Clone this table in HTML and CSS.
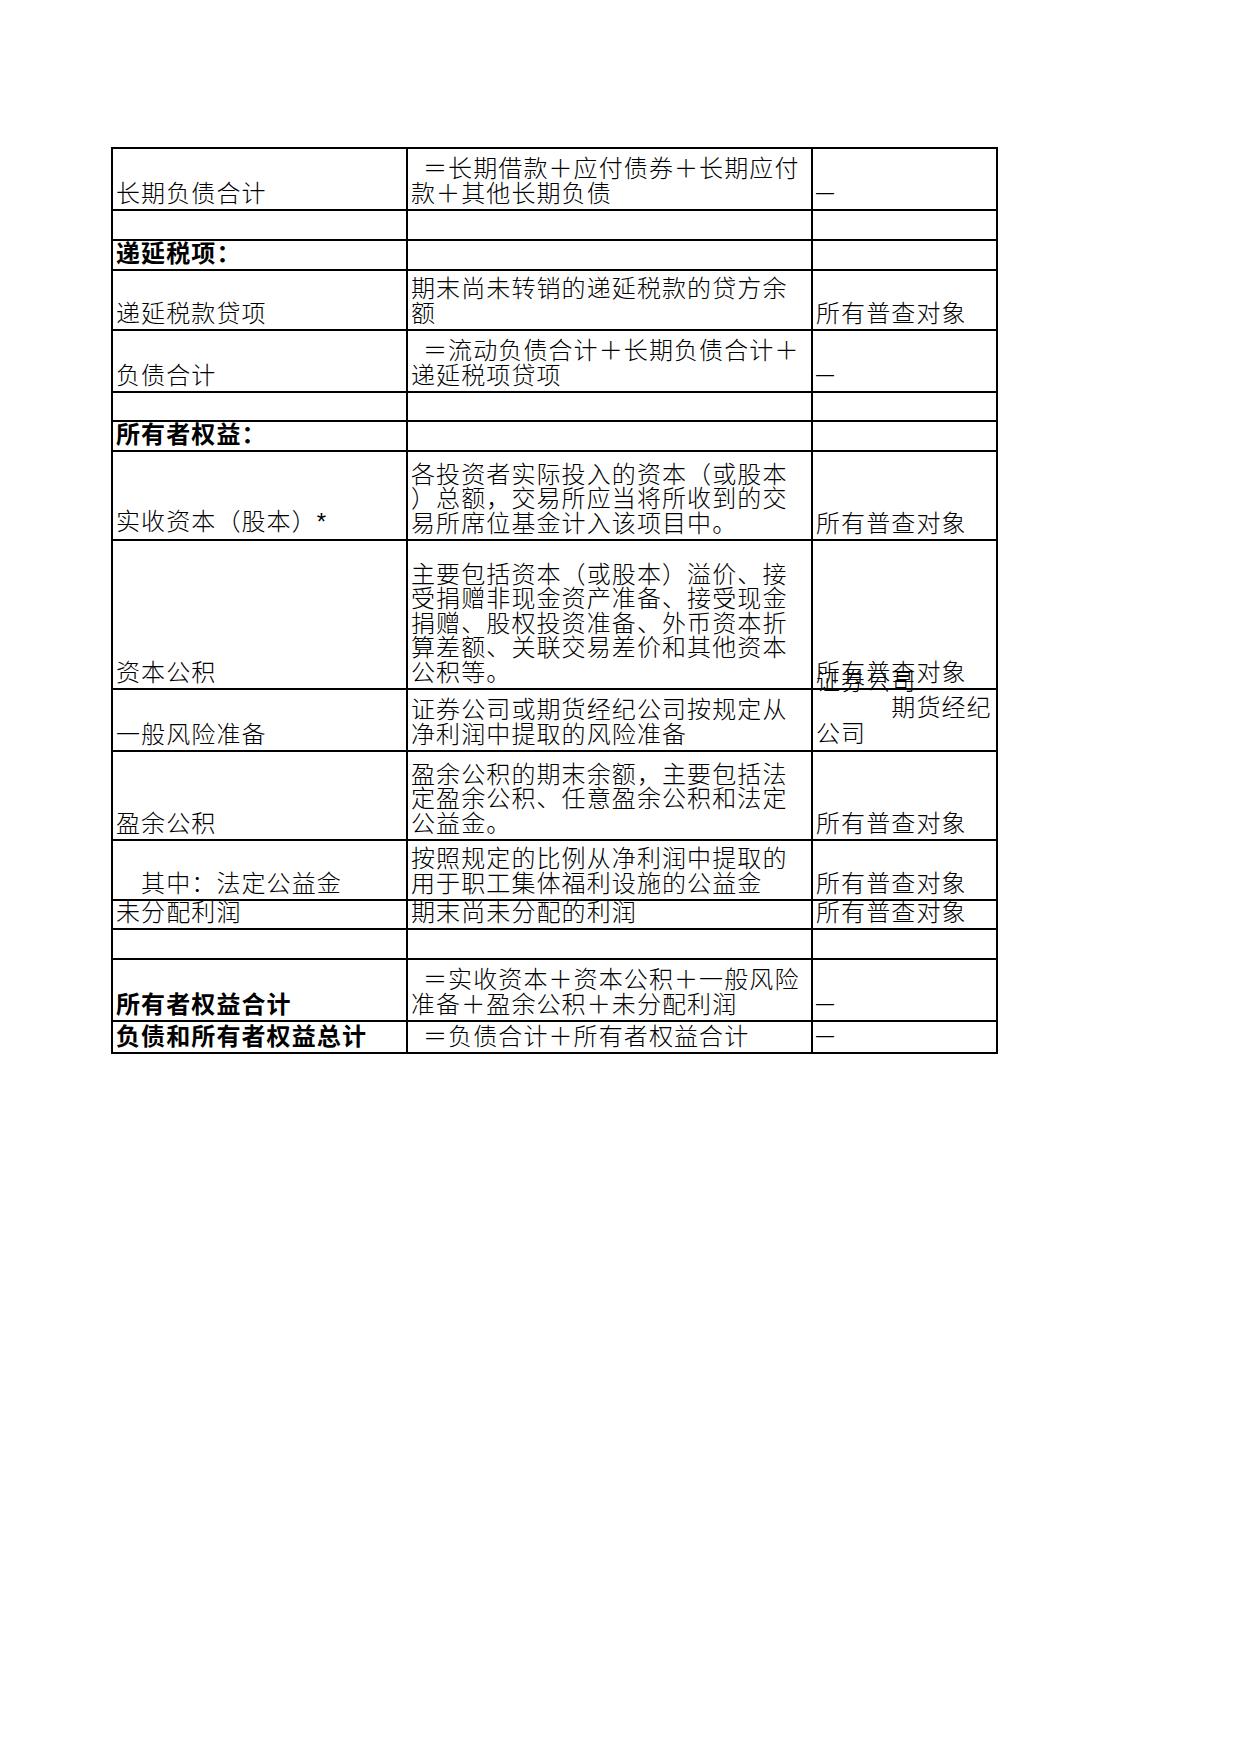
FILE: index.html
```html
<!DOCTYPE html>
<html lang="zh-CN">
<head>
<meta charset="utf-8">
<title>资产负债表指标说明</title>
<link rel="stylesheet" href="styles.css">
</head>
<body>
<div class="sheet">
  <div class="row r62">
    <div class="c c1">长期负债合计</div>
    <div class="c c2 eq">＝长期借款＋应付债券＋长期应付<br>款＋其他长期负债</div>
    <div class="c c3"><span class="dash">—</span></div>
  </div>
  <div class="row r30">
    <div class="c c1"></div>
    <div class="c c2"></div>
    <div class="c c3"></div>
  </div>
  <div class="row r30">
    <div class="c c1 b">递延税项：</div>
    <div class="c c2"></div>
    <div class="c c3"></div>
  </div>
  <div class="row r60">
    <div class="c c1">递延税款贷项</div>
    <div class="c c2">期末尚未转销的递延税款的贷方余<br>额</div>
    <div class="c c3">所有普查对象</div>
  </div>
  <div class="row r62">
    <div class="c c1">负债合计</div>
    <div class="c c2 eq">＝流动负债合计＋长期负债合计＋<br>递延税项贷项</div>
    <div class="c c3"><span class="dash">—</span></div>
  </div>
  <div class="row r29">
    <div class="c c1"></div>
    <div class="c c2"></div>
    <div class="c c3"></div>
  </div>
  <div class="row r30">
    <div class="c c1 b">所有者权益：</div>
    <div class="c c2"></div>
    <div class="c c3"></div>
  </div>
  <div class="row r89">
    <div class="c c1"><span class="txt">实收资本（股本）<span class="ast">*</span></span></div>
    <div class="c c2">各投资者实际投入的资本（或股本<br>）总额，交易所应当将所收到的交<br>易所席位基金计入该项目中。</div>
    <div class="c c3">所有普查对象</div>
  </div>
  <div class="row r149">
    <div class="c c1">资本公积</div>
    <div class="c c2">主要包括资本（或股本）溢价、接<br>受捐赠非现金资产准备、接受现金<br>捐赠、股权投资准备、外币资本折<br>算差额、关联交易差价和其他资本<br>公积等。</div>
    <div class="c c3">所有普查对象</div>
  </div>
  <div class="row r62">
    <div class="c c1">一般风险准备</div>
    <div class="c c2">证券公司或期货经纪公司按规定从<br>净利润中提取的风险准备</div>
    <div class="c c3 tall">证券公司<br>　　　期货经纪<br>公司</div>
  </div>
  <div class="row r89">
    <div class="c c1">盈余公积</div>
    <div class="c c2">盈余公积的期末余额，主要包括法<br>定盈余公积、任意盈余公积和法定<br>公益金。</div>
    <div class="c c3">所有普查对象</div>
  </div>
  <div class="row r60">
    <div class="c c1">　其中：法定公益金</div>
    <div class="c c2">按照规定的比例从净利润中提取的<br>用于职工集体福利设施的公益金</div>
    <div class="c c3">所有普查对象</div>
  </div>
  <div class="row r29">
    <div class="c c1">未分配利润</div>
    <div class="c c2">期末尚未分配的利润</div>
    <div class="c c3">所有普查对象</div>
  </div>
  <div class="row r30">
    <div class="c c1"></div>
    <div class="c c2"></div>
    <div class="c c3"></div>
  </div>
  <div class="row r62">
    <div class="c c1 b">所有者权益合计</div>
    <div class="c c2 eq">＝实收资本＋资本公积＋一般风险<br>准备＋盈余公积＋未分配利润</div>
    <div class="c c3"><span class="dash">—</span></div>
  </div>
  <div class="row r32">
    <div class="c c1 b">负债和所有者权益总计</div>
    <div class="c c2 eq">＝负债合计＋所有者权益合计</div>
    <div class="c c3"><span class="dash">—</span></div>
  </div>
</div>
</body>
</html>
```

FILE: styles.css
```css
html, body {
  margin: 0;
  padding: 0;
  background: #ffffff;
}

body {
  font-family: "Noto Sans CJK SC", "Noto Sans", sans-serif;
  font-size: 24px;
  color: #000000;
}

.sheet {
  display: flex;
  flex-direction: column;
  width: max-content;
  margin: 147px 0 0 111px;
  border-left: 2px solid #000;
  border-top: 2px solid #000;
}

.row {
  display: flex;
}

.r29 { height: 29px; }
.r30 { height: 30px; }
.r32 { height: 32px; }
.r60 { height: 60px; }
.r62 { height: 62px; }
.r89 { height: 89px; }
.r149 { height: 149px; }

.c {
  box-sizing: border-box;
  display: flex;
  flex-direction: column;
  justify-content: flex-end;
  border-right: 2px solid #000;
  border-bottom: 2px solid #000;
  padding: 0 3px 5px 3px;
  line-height: 24.5px;
  letter-spacing: 1.1px;
  white-space: nowrap;
  font-weight: 300;
}

.c1 { width: 295px; }
.c2 { width: 405px; }
.c3 { width: 185px; }

.eq { text-indent: 12px; }

.b { font-weight: 700; letter-spacing: 1.1px; }

.tall { line-height: 26px; }

.txt { display: block; }

.ast {
  font-family: "Liberation Sans", sans-serif;
  font-size: 24px;
  letter-spacing: 0;
}

.dash {
  font-family: "Liberation Sans", sans-serif;
  font-size: 18px;
  letter-spacing: 0;
  vertical-align: 2px;
}
```
